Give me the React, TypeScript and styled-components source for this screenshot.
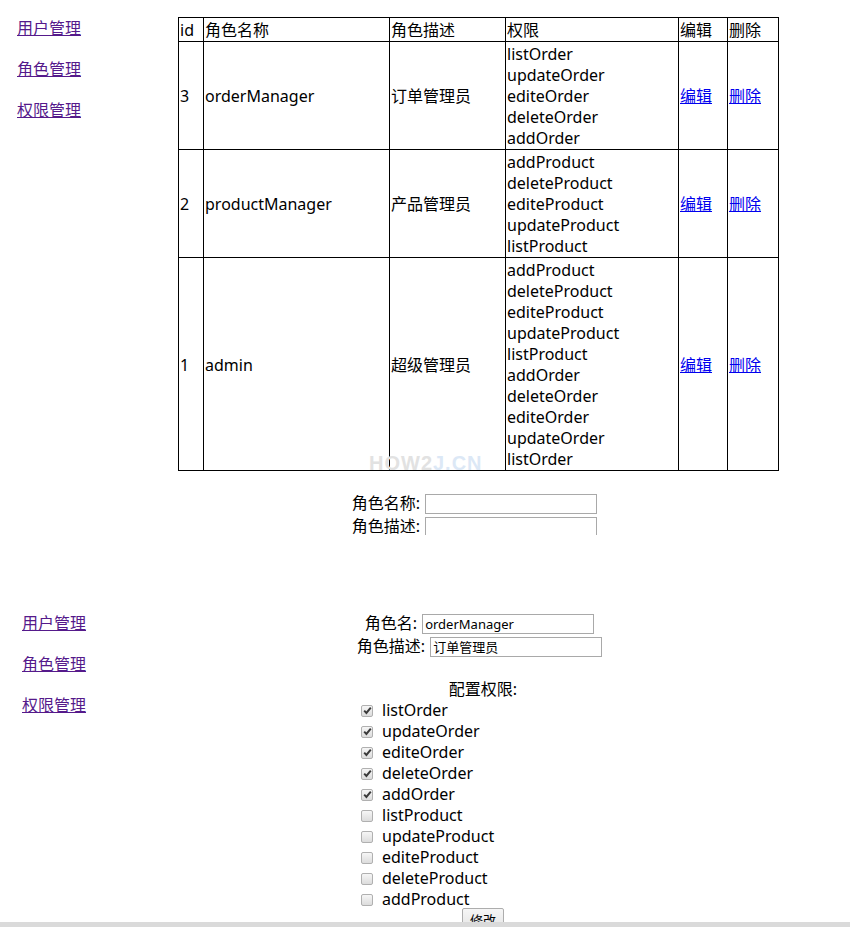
import styled, { createGlobalStyle } from "styled-components";

const GlobalStyle = createGlobalStyle`
  html, body {
    margin: 0;
    padding: 0;
    background: #ffffff;
  }
  body {
    font-family: "Noto Sans", "Noto Sans CJK SC", sans-serif;
    font-size: 16px;
    line-height: 21px;
    color: #000000;
  }
`;

type Role = {
  id: number;
  name: string;
  desc: string;
  perms: string[];
};

const roles: Role[] = [
  {
    id: 3,
    name: "orderManager",
    desc: "订单管理员",
    perms: ["listOrder", "updateOrder", "editeOrder", "deleteOrder", "addOrder"],
  },
  {
    id: 2,
    name: "productManager",
    desc: "产品管理员",
    perms: ["addProduct", "deleteProduct", "editeProduct", "updateProduct", "listProduct"],
  },
  {
    id: 1,
    name: "admin",
    desc: "超级管理员",
    perms: [
      "addProduct",
      "deleteProduct",
      "editeProduct",
      "updateProduct",
      "listProduct",
      "addOrder",
      "deleteOrder",
      "editeOrder",
      "updateOrder",
      "listOrder",
    ],
  },
];

const allPerms = [
  { name: "listOrder", checked: true },
  { name: "updateOrder", checked: true },
  { name: "editeOrder", checked: true },
  { name: "deleteOrder", checked: true },
  { name: "addOrder", checked: true },
  { name: "listProduct", checked: false },
  { name: "updateProduct", checked: false },
  { name: "editeProduct", checked: false },
  { name: "deleteProduct", checked: false },
  { name: "addProduct", checked: false },
];

const navItems = ["用户管理", "角色管理", "权限管理"];

const SideNav = ({ left }: { left: number }) => (
  <Nav $left={left}>
    {navItems.map((n) => (
      <NavLink key={n} href="#">
        {n}
      </NavLink>
    ))}
  </Nav>
);

const App = () => {
  return (
    <Page>
      <GlobalStyle />

      {/* list page */}
      <Screen $height={535} $top={17}>
        <SideNav left={17} />
        <Main>
          <TableWrap>
            <RoleTable>
              <colgroup>
                <col style={{ width: 25 }} />
                <col style={{ width: 186 }} />
                <col style={{ width: 116 }} />
                <col style={{ width: 173 }} />
                <col style={{ width: 49 }} />
                <col style={{ width: 51 }} />
              </colgroup>
              <thead>
                <tr>
                  <Th>id</Th>
                  <Th>角色名称</Th>
                  <Th>角色描述</Th>
                  <Th>权限</Th>
                  <Th>编辑</Th>
                  <Th>删除</Th>
                </tr>
              </thead>
              <tbody>
                {roles.map((r) => (
                  <tr key={r.id}>
                    <Td>{r.id}</Td>
                    <Td>{r.name}</Td>
                    <Td>{r.desc}</Td>
                    <Td>
                      {r.perms.map((p, i) => (
                        <PermLine key={i}>{p}</PermLine>
                      ))}
                    </Td>
                    <Td>
                      <CellLink href="#">编辑</CellLink>
                    </Td>
                    <Td>
                      <CellLink href="#">删除</CellLink>
                    </Td>
                  </tr>
                ))}
              </tbody>
            </RoleTable>
            <Watermark>
              HOW2<Blue>J.CN</Blue>
            </Watermark>
          </TableWrap>

          <Form $top={21}>
            <FieldRow>
              <Label>角色名称:</Label>
              <TextInput $width={172} defaultValue="" />
            </FieldRow>
            <FieldRow>
              <Label>角色描述:</Label>
              <TextInput $width={172} defaultValue="" />
            </FieldRow>
          </Form>
        </Main>
      </Screen>

      {/* edit page */}
      <Screen $top={77} $grow>
        <SideNav left={22} />
        <Main>
          <Form $top={0}>
            <FieldRow>
              <Label>角色名:</Label>
              <TextInput $width={172} defaultValue="orderManager" />
            </FieldRow>
            <FieldRow>
              <Label>角色描述:</Label>
              <TextInput $width={172} defaultValue="订单管理员" />
            </FieldRow>
          </Form>

          <SectionTitle>配置权限:</SectionTitle>
          <CheckList>
            {allPerms.map((p) => (
              <CheckRow key={p.name}>
                <CheckBox $checked={p.checked}>
                  {p.checked && (
                    <svg width="9" height="9" viewBox="0 0 9 9">
                      <path
                        d="M1.2 4.6 L3.4 6.9 L7.8 1.6"
                        fill="none"
                        stroke="#3a3a3a"
                        strokeWidth="2"
                      />
                    </svg>
                  )}
                </CheckBox>
                <span>{p.name}</span>
              </CheckRow>
            ))}
          </CheckList>
          <ButtonRow>
            <SubmitButton>修改</SubmitButton>
          </ButtonRow>
        </Main>
      </Screen>

      <ScrollBar />
    </Page>
  );
};

export default App;

const Page = styled.div`
  width: 850px;
  height: 927px;
  display: flex;
  flex-direction: column;
  overflow: hidden;
  background: #ffffff;
`;

const Screen = styled.section<{ $height?: number; $top: number; $grow?: boolean }>`
  display: flex;
  align-items: flex-start;
  padding-top: ${(p) => p.$top}px;
  box-sizing: border-box;
  overflow: hidden;
  ${(p) => (p.$height ? `height: ${p.$height}px; flex-shrink: 0;` : "")}
  ${(p) => (p.$grow ? "flex: 1; min-height: 0;" : "")}
`;

const Nav = styled.nav<{ $left: number }>`
  width: 161px;
  padding-left: ${(p) => p.$left}px;
  padding-top: 1px;
  display: flex;
  flex-direction: column;
  gap: 20px;
  flex-shrink: 0;
`;

const NavLink = styled.a`
  color: #551a8b;
  text-decoration: underline;
  line-height: 21px;
  align-self: flex-start;
`;

const Main = styled.div`
  width: 600px;
  flex-shrink: 0;
  display: flex;
  flex-direction: column;
`;

const TableWrap = styled.div`
  position: relative;
`;

const RoleTable = styled.table`
  width: 600px;
  table-layout: fixed;
  border-collapse: collapse;
  border-spacing: 0;
`;

const Th = styled.th`
  border: 1px solid #000000;
  padding: 2px 1px 0;
  font-weight: normal;
  text-align: left;
  white-space: nowrap;
`;

const Td = styled.td`
  border: 1px solid #000000;
  padding: 2px 1px 0;
  vertical-align: middle;
  white-space: nowrap;
`;

const PermLine = styled.div`
  line-height: 21px;
`;

const CellLink = styled.a`
  color: #0000ee;
  text-decoration: underline;
`;

const Watermark = styled.div`
  position: absolute;
  left: 191px;
  bottom: -3px;
  font-family: "Liberation Sans", Arial, sans-serif;
  font-weight: bold;
  font-size: 20px;
  letter-spacing: 1px;
  color: #e2e2e2;
  pointer-events: none;
`;

const Blue = styled.span`
  color: #dce8f6;
`;

const Form = styled.form<{ $top: number }>`
  margin-top: ${(p) => p.$top}px;
  display: flex;
  flex-direction: column;
`;

const FieldRow = styled.div`
  display: flex;
  justify-content: center;
  align-items: center;
  gap: 5px;
  height: 23px;
  padding-right: 7px;
`;

const Label = styled.label`
  white-space: nowrap;
`;

const TextInput = styled.input<{ $width: number }>`
  width: ${(p) => p.$width}px;
  height: 20px;
  box-sizing: border-box;
  border: 1px solid #a9a9a9;
  padding: 0 2px;
  margin: 0;
  font-family: "Noto Sans", "Noto Sans CJK SC", sans-serif;
  font-size: 13px;
  color: #000000;
  outline: none;
`;

const SectionTitle = styled.div`
  margin-top: 21px;
  text-align: center;
  line-height: 21px;
`;

const CheckList = styled.div`
  display: flex;
  flex-direction: column;
  padding-left: 178px;
`;

const CheckRow = styled.label`
  display: flex;
  align-items: center;
  gap: 9px;
  height: 21px;
`;

const CheckBox = styled.span<{ $checked: boolean }>`
  width: 12px;
  height: 12px;
  box-sizing: border-box;
  border: 1px solid #b0b0b0;
  border-radius: 2px;
  background: linear-gradient(#f6f6f6, #dcdcdc);
  display: flex;
  align-items: center;
  justify-content: center;
`;

const ButtonRow = styled.div`
  display: flex;
  justify-content: center;
  margin-top: -2px;
`;

const SubmitButton = styled.button`
  width: 42px;
  height: 22px;
  padding: 0;
  font-family: "Noto Sans CJK SC", sans-serif;
  font-size: 13px;
  background: linear-gradient(#f6f6f6, #e4e4e4);
  border: 1px solid #adadad;
  border-radius: 2px;
  color: #000000;
`;

const ScrollBar = styled.div`
  height: 5px;
  flex-shrink: 0;
  background: #dadada;
`;
